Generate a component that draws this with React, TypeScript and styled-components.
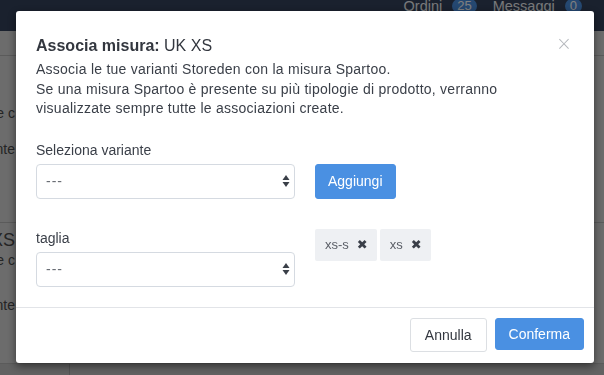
import React from 'react';
import styled, { createGlobalStyle } from 'styled-components';

const GlobalStyle = createGlobalStyle`
  html, body {
    margin: 0;
    padding: 0;
    width: 604px;
    height: 375px;
    overflow: hidden;
    font-family: "Liberation Sans", Arial, sans-serif;
    background: #d8d8d8;
  }
`;

const Page = styled.div`
  width: 604px;
  height: 375px;
  display: flex;
  flex-direction: column;
  background: #d8d8d8;
`;

const NavBar = styled.div`
  height: 31px;
  flex-shrink: 0;
  background: #34425c;
  display: flex;
  justify-content: flex-end;
  align-items: flex-start;
  gap: 16px;
  padding-right: 22px;
  font-size: 14.5px;
  color: #f0f2f5;
  line-height: 12px;
`;

const NavItem = styled.div`
  display: flex;
  align-items: center;
  gap: 10px;
  margin-top: -1px;
`;

const NavBadge = styled.span`
  background: #4a90e2;
  color: #ffffff;
  border-radius: 8px;
  padding: 1px 5px;
  font-size: 13px;
`;

const Block = styled.div<{ h: number }>`
  height: ${p => p.h}px;
  flex-shrink: 0;
  border-bottom: 1px solid #b6b6b6;
  display: flex;
  flex-direction: column;
`;

const EdgeText = styled.div<{ top: number; big?: boolean }>`
  width: 15px;
  margin-top: ${p => p.top}px;
  display: flex;
  justify-content: flex-end;
  white-space: nowrap;
  font-size: ${p => (p.big ? 18 : 14)}px;
  line-height: 18px;
  color: #4a4a4a;
`;

const BottomStrip = styled.div`
  flex: 1;
  display: flex;
  background: #c4c4c4;
`;

const SideCell = styled.div`
  width: 69px;
  border-right: 1px solid #a8a8a8;
`;

const Overlay = styled.div`
  position: fixed;
  inset: 0;
  background: rgba(0, 0, 0, 0.5);
  display: flex;
  align-items: flex-start;
`;

const Modal = styled.div`
  margin: 11px 0 0 16px;
  width: 578px;
  background: #ffffff;
  border-radius: 3px;
  box-shadow: 0 3px 9px rgba(0, 0, 0, 0.5);
  color: #3a3f48;
  display: flex;
  flex-direction: column;
`;

const Body = styled.div`
  padding: 25px 20px 20px 20px;
  display: flex;
  flex-direction: column;
`;

const TitleRow = styled.div`
  display: flex;
  justify-content: space-between;
  align-items: flex-start;
`;

const Title = styled.h4`
  margin: 0;
  font-size: 16px;
  line-height: 20px;
  font-weight: 400;
  color: #33373f;

  b {
    font-weight: 700;
  }
`;

const Close = styled.button`
  border: none;
  background: none;
  padding: 0;
  margin: -3px 2px 0 0;
  color: #b5b8bd;
  font-size: 19px;
  line-height: 20px;
  font-family: "DejaVu Sans", sans-serif;
  font-weight: 300;
`;

const Description = styled.p`
  margin: 4px 0 0 0;
  max-width: 480px;
  font-size: 14px;
  letter-spacing: 0.25px;
  line-height: 19.5px;
`;

const FieldRow = styled.div<{ mt: number }>`
  display: flex;
  gap: 20px;
  margin-top: ${p => p.mt}px;
`;

const Field = styled.div`
  width: 259px;
  display: flex;
  flex-direction: column;
`;

const Label = styled.label`
  font-size: 14px;
  line-height: 18px;
  height: 18px;
  margin: 0 0 5px 0;
`;

const SelectBox = styled.div`
  height: 35px;
  box-sizing: border-box;
  border: 1px solid #d5dae1;
  border-radius: 4px;
  display: flex;
  align-items: center;
  justify-content: space-between;
  padding: 0 4px 0 9px;
  font-size: 14px;
  letter-spacing: 1px;
  color: #6a6e75;
`;

const Side = styled.div<{ offset: number }>`
  display: flex;
  align-items: flex-start;
  gap: 3px;
  padding-top: ${p => p.offset}px;
`;

const Button = styled.button<{ primary?: boolean; h: number; px: number }>`
  height: ${p => p.h}px;
  box-sizing: border-box;
  padding: 0 ${p => p.px}px;
  border-radius: 3px;
  font-family: inherit;
  font-size: 14px;
  border: 1px solid ${p => (p.primary ? '#4a90e2' : '#dcdfe3')};
  background: ${p => (p.primary ? '#4a90e2' : '#ffffff')};
  color: ${p => (p.primary ? '#ffffff' : '#33373f')};
`;

const Tag = styled.div`
  height: 32px;
  box-sizing: border-box;
  padding: 0 9px 0 10px;
  border-radius: 2px;
  background: #eef0f3;
  display: flex;
  align-items: center;
  gap: 8px;
  font-size: 13px;
  color: #5a5e66;
`;

const TagX = styled.span`
  font-family: "DejaVu Sans", sans-serif;
  font-weight: 700;
  font-size: 13px;
  color: #3a3f48;
`;

const Footer = styled.div`
  border-top: 1px solid #e2e4e8;
  padding: 10px 10px 11px 10px;
  display: flex;
  justify-content: flex-end;
  gap: 8px;
`;

const Arrows = () => (
  <svg width="8" height="14" viewBox="0 0 8 14">
    <path d="M4 1 L7.5 6 L0.5 6 Z" fill="#3a3f48" />
    <path d="M4 13 L7.5 8 L0.5 8 Z" fill="#3a3f48" />
  </svg>
);

const Select = () => (
  <SelectBox>
    <span>---</span>
    <Arrows />
  </SelectBox>
);

export default function App() {
  return (
    <>
      <GlobalStyle />
      <Page>
        <NavBar>
          <NavItem>
            Ordini <NavBadge>25</NavBadge>
          </NavItem>
          <NavItem>
            Messaggi <NavBadge>0</NavBadge>
          </NavItem>
        </NavBar>
        <Block h={24} />
        <Block h={166}>
          <EdgeText top={48}>Taglia e c</EdgeText>
          <EdgeText top={18}>Equivalente</EdgeText>
        </Block>
        <Block h={140}>
          <EdgeText top={8} big>UK XS</EdgeText>
          <EdgeText top={2}>Taglia e c</EdgeText>
          <EdgeText top={27}>Equivalente</EdgeText>
        </Block>
        <BottomStrip>
          <SideCell />
        </BottomStrip>
      </Page>
      <Overlay>
        <Modal>
          <Body>
            <TitleRow>
              <Title>
                <b>Associa misura:</b> UK XS
              </Title>
              <Close>×</Close>
            </TitleRow>
            <Description>
              Associa le tue varianti Storeden con la misura Spartoo.
              <br />
              Se una misura Spartoo è presente su più tipologie di prodotto, verranno
              visualizzate sempre tutte le associazioni create.
            </Description>
            <FieldRow mt={22}>
              <Field>
                <Label>Seleziona variante</Label>
                <Select />
              </Field>
              <Side offset={23}>
                <Button primary h={35} px={12}>Aggiungi</Button>
              </Side>
            </FieldRow>
            <FieldRow mt={30}>
              <Field>
                <Label>taglia</Label>
                <Select />
              </Field>
              <Side offset={0}>
                <Tag>
                  xs-s <TagX>✖</TagX>
                </Tag>
                <Tag>
                  xs <TagX>✖</TagX>
                </Tag>
              </Side>
            </FieldRow>
          </Body>
          <Footer>
            <Button h={34} px={14}>Annulla</Button>
            <Button primary h={32} px={13}>Conferma</Button>
          </Footer>
        </Modal>
      </Overlay>
    </>
  );
}
